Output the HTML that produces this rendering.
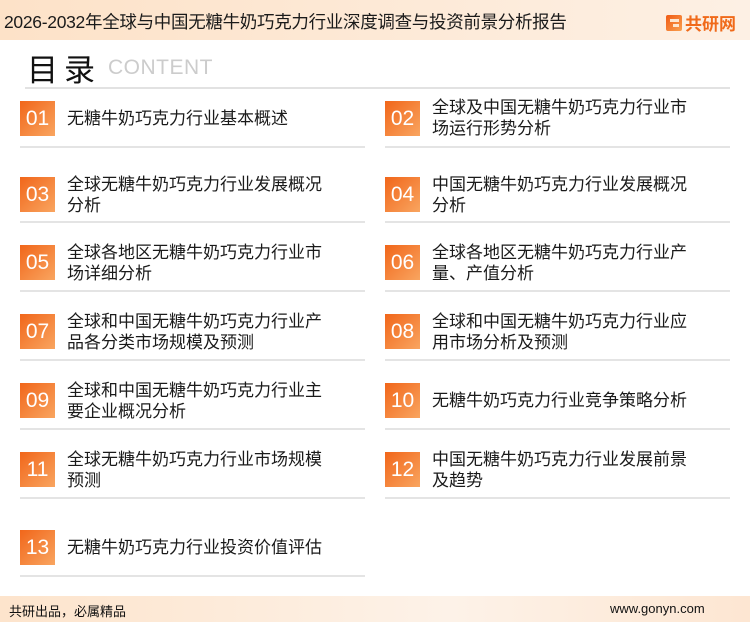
<!DOCTYPE html>
<html><head><meta charset="utf-8"><style>
*{margin:0;padding:0;box-sizing:border-box}
body{width:750px;height:622px;position:relative;background:#fff;font-family:"Liberation Sans","Noto Sans CJK SC",sans-serif;overflow:hidden;color:#222}
.hdr{position:absolute;left:0;top:0;width:750px;height:40px;background:linear-gradient(90deg,#fde2c8,#fdf0e4)}
.hdr .t{position:absolute;left:4px;top:9px;font-size:17.5px;color:#1a1a1a;white-space:nowrap;letter-spacing:-0.3px}
.logo{position:absolute;left:666px;top:10px;display:flex;align-items:center;gap:3px;color:#f06a1a;font-weight:bold;font-size:17px}
.g{width:16px;height:16px;background:linear-gradient(135deg,#f05a14,#f9a050);border-radius:2px;position:relative}
.g:after{content:"";position:absolute;left:4px;top:4px;width:9px;height:3px;background:#fde6d0}
.g:before{content:"";position:absolute;left:7px;top:9px;width:6px;height:3px;background:#fde6d0}
.ml{position:absolute;left:27px;top:45px;font-size:31px;color:#111;letter-spacing:6px}
.ct{position:absolute;left:108px;top:56px;font-size:21px;color:#ccc;letter-spacing:0.5px}
.hl{position:absolute;left:25px;top:87px;width:705px;height:2px;background:#e2e2e2}
.box{position:absolute;width:35px;height:35px;background:linear-gradient(135deg,#f1661a,#f9a560);color:#fff;font-size:21px;text-align:center;line-height:35px}
.tx{position:absolute;font-size:17px;line-height:21px;color:#1a1a1a;width:258px}
.ln{position:absolute;height:2px;background:#e4e4e4;width:345px}
.ftr{position:absolute;left:0;top:596px;width:750px;height:26px;background:linear-gradient(90deg,#fde4cc,#fdf2e8 60%,#fde6d2)}
.ftr .a{position:absolute;left:9px;top:5px;font-size:13px;color:#111}
.ftr .b{position:absolute;left:610px;top:5px;font-size:13px;color:#111}
</style></head><body>
<div class="hdr"><div class="t">2026-2032年全球与中国无糖牛奶巧克力行业深度调查与投资前景分析报告</div>
<div class="logo"><div class="g"></div>共研网</div></div>
<div class="ml">目录</div><div class="ct">CONTENT</div><div class="hl"></div>

<div class="box" style="left:20px;top:101px">01</div><div class="tx" style="left:67px;top:108px">无糖牛奶巧克力行业基本概述</div><div class="ln" style="left:20px;top:146px"></div>
<div class="box" style="left:385px;top:101px">02</div><div class="tx" style="left:432px;top:97px">全球及中国无糖牛奶巧克力行业市场运行形势分析</div><div class="ln" style="left:385px;top:146px"></div>

<div class="box" style="left:20px;top:177px">03</div><div class="tx" style="left:67px;top:174px">全球无糖牛奶巧克力行业发展概况分析</div><div class="ln" style="left:20px;top:221px"></div>
<div class="box" style="left:385px;top:177px">04</div><div class="tx" style="left:432px;top:174px">中国无糖牛奶巧克力行业发展概况分析</div><div class="ln" style="left:385px;top:221px"></div>

<div class="box" style="left:20px;top:245px">05</div><div class="tx" style="left:67px;top:242px">全球各地区无糖牛奶巧克力行业市场详细分析</div><div class="ln" style="left:20px;top:290px"></div>
<div class="box" style="left:385px;top:245px">06</div><div class="tx" style="left:432px;top:242px">全球各地区无糖牛奶巧克力行业产量、产值分析</div><div class="ln" style="left:385px;top:290px"></div>

<div class="box" style="left:20px;top:314px">07</div><div class="tx" style="left:67px;top:311px">全球和中国无糖牛奶巧克力行业产品各分类市场规模及预测</div><div class="ln" style="left:20px;top:359px"></div>
<div class="box" style="left:385px;top:314px">08</div><div class="tx" style="left:432px;top:311px">全球和中国无糖牛奶巧克力行业应用市场分析及预测</div><div class="ln" style="left:385px;top:359px"></div>

<div class="box" style="left:20px;top:383px">09</div><div class="tx" style="left:67px;top:380px">全球和中国无糖牛奶巧克力行业主要企业概况分析</div><div class="ln" style="left:20px;top:428px"></div>
<div class="box" style="left:385px;top:383px">10</div><div class="tx" style="left:432px;top:390px">无糖牛奶巧克力行业竞争策略分析</div><div class="ln" style="left:385px;top:428px"></div>

<div class="box" style="left:20px;top:452px">11</div><div class="tx" style="left:67px;top:449px">全球无糖牛奶巧克力行业市场规模预测</div><div class="ln" style="left:20px;top:497px"></div>
<div class="box" style="left:385px;top:452px">12</div><div class="tx" style="left:432px;top:449px">中国无糖牛奶巧克力行业发展前景及趋势</div><div class="ln" style="left:385px;top:497px"></div>

<div class="box" style="left:20px;top:530px">13</div><div class="tx" style="left:67px;top:537px">无糖牛奶巧克力行业投资价值评估</div><div class="ln" style="left:20px;top:575px"></div>

<div class="ftr"><div class="a">共研出品，必属精品</div><div class="b">www.gonyn.com</div></div>
</body></html>
